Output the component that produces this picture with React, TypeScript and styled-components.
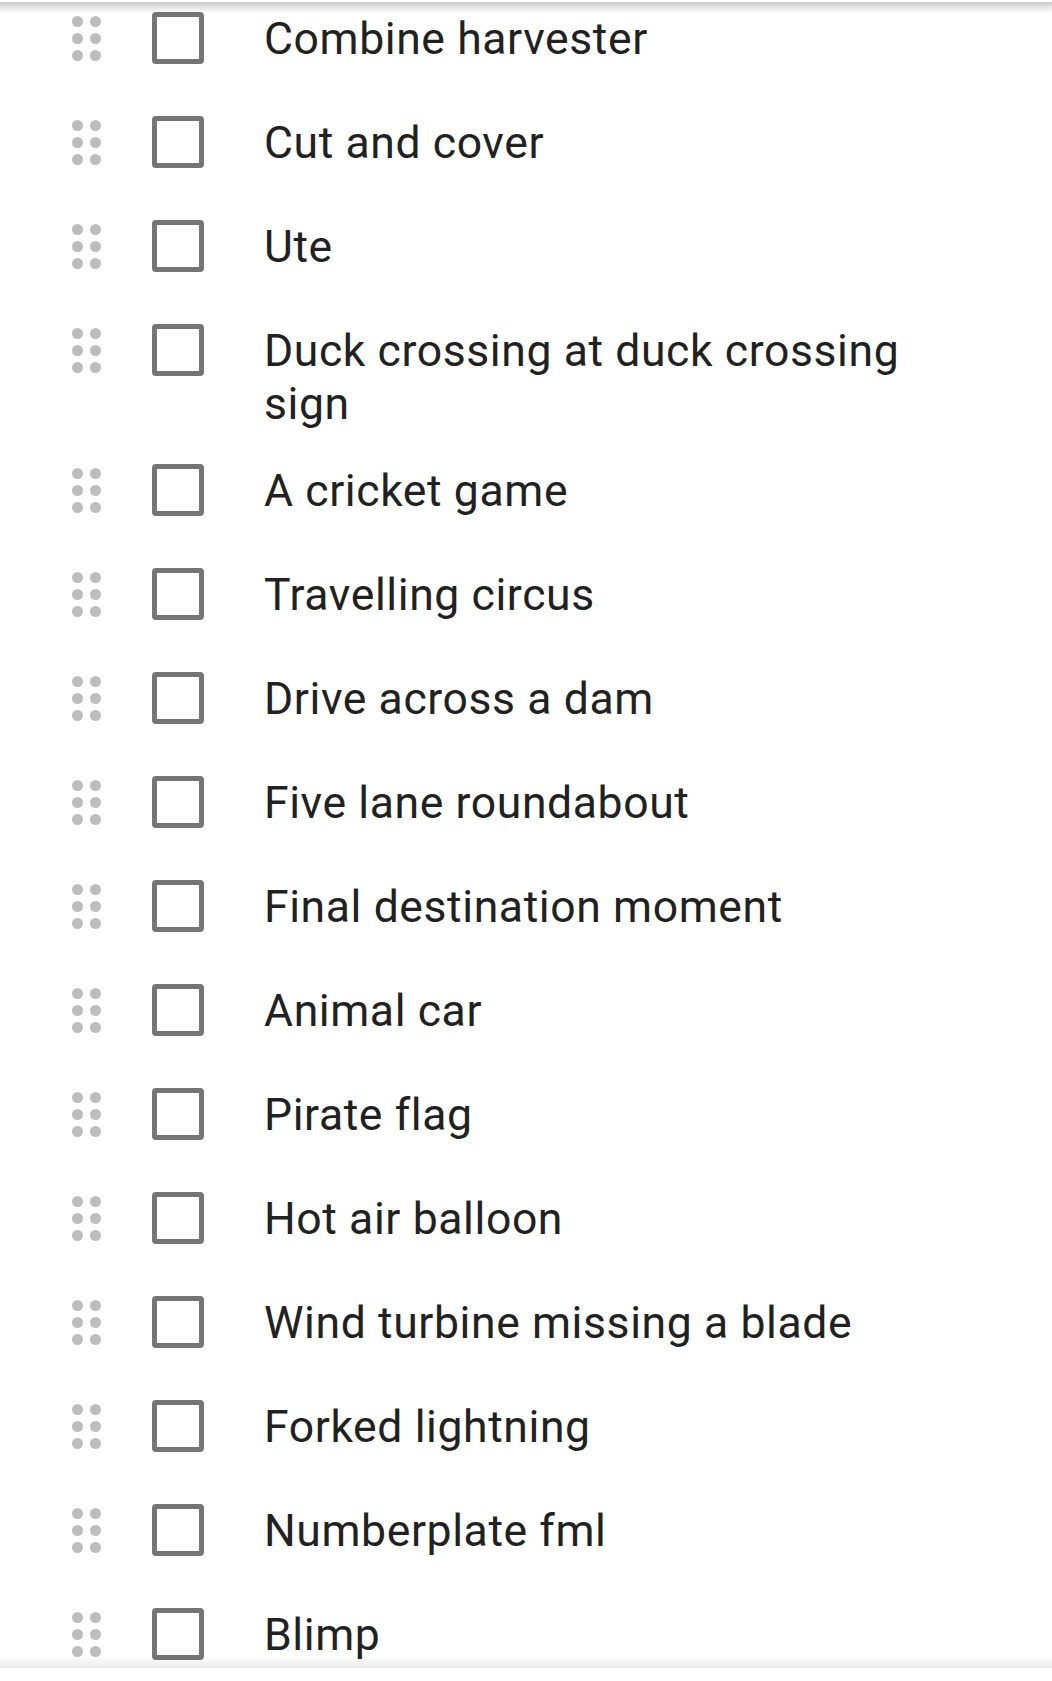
import React from "react";
import styled, { createGlobalStyle } from "styled-components";

const GlobalStyle = createGlobalStyle`
  html, body {
    margin: 0;
    padding: 0;
    background: #ffffff;
  }
  body {
    font-family: Roboto, "Noto Sans", "Liberation Sans", sans-serif;
    overflow: hidden;
  }
`;

const Page = styled.div`
  position: relative;
  width: 1052px;
  height: 1681px;
  overflow: hidden;
  background: #ffffff;
`;

const List = styled.ul`
  list-style: none;
  margin: -14px 0 0 0;
  padding: 0;
`;

const Row = styled.li`
  display: flex;
  align-items: flex-start;
  min-height: 104px;
  padding: 0 96px 0 72px;
  box-sizing: border-box;
`;

const Handle = styled.svg`
  flex: none;
  width: 29px;
  height: 45px;
  margin-top: 30px;
`;

const Box = styled.span`
  flex: none;
  width: 52px;
  height: 52px;
  box-sizing: border-box;
  margin: 26px 0 0 51px;
  border: 5.5px solid #757575;
  border-radius: 4px;
`;

const Label = styled.span`
  flex: 1;
  margin-left: 60px;
  padding: 27px 0 7px 0;
  font-size: 44.5px;
  letter-spacing: 0.6px;
  line-height: 53px;
  color: #212121;
  font-weight: 400;
`;

const TopShade = styled.div`
  position: absolute;
  left: 0;
  right: 0;
  top: 0;
  height: 13px;
  background: linear-gradient(
    to bottom,
    #ffffff 0px,
    #ffffff 2px,
    rgba(0, 0, 0, 0.2) 2px,
    rgba(0, 0, 0, 0) 13px
  );
  pointer-events: none;
`;

const BottomShade = styled.div`
  position: absolute;
  left: 0;
  right: 0;
  bottom: 0;
  height: 26px;
  background: linear-gradient(
    to bottom,
    rgba(0, 0, 0, 0) 0px,
    rgba(0, 0, 0, 0.08) 13px,
    #ffffff 13px,
    #ffffff 26px
  );
  pointer-events: none;
`;

const items = [
  "Combine harvester",
  "Cut and cover",
  "Ute",
  "Duck crossing at duck crossing sign",
  "A cricket game",
  "Travelling circus",
  "Drive across a dam",
  "Five lane roundabout",
  "Final destination moment",
  "Animal car",
  "Pirate flag",
  "Hot air balloon",
  "Wind turbine missing a blade",
  "Forked lightning",
  "Numberplate fml",
  "Blimp",
];

const DragDots = () => (
  <Handle viewBox="0 0 29 45" aria-hidden="true">
    {[5.5, 22.5, 39.5].map((cy) =>
      [5.5, 23.5].map((cx) => (
        <circle key={`${cx}-${cy}`} cx={cx} cy={cy} r={5.5} fill="#bdbdbd" />
      ))
    )}
  </Handle>
);

export default function App() {
  return (
    <Page>
      <GlobalStyle />
      <List>
        {items.map((text) => (
          <Row key={text}>
            <DragDots />
            <Box />
            <Label>{text}</Label>
          </Row>
        ))}
      </List>
      <TopShade />
      <BottomShade />
    </Page>
  );
}
